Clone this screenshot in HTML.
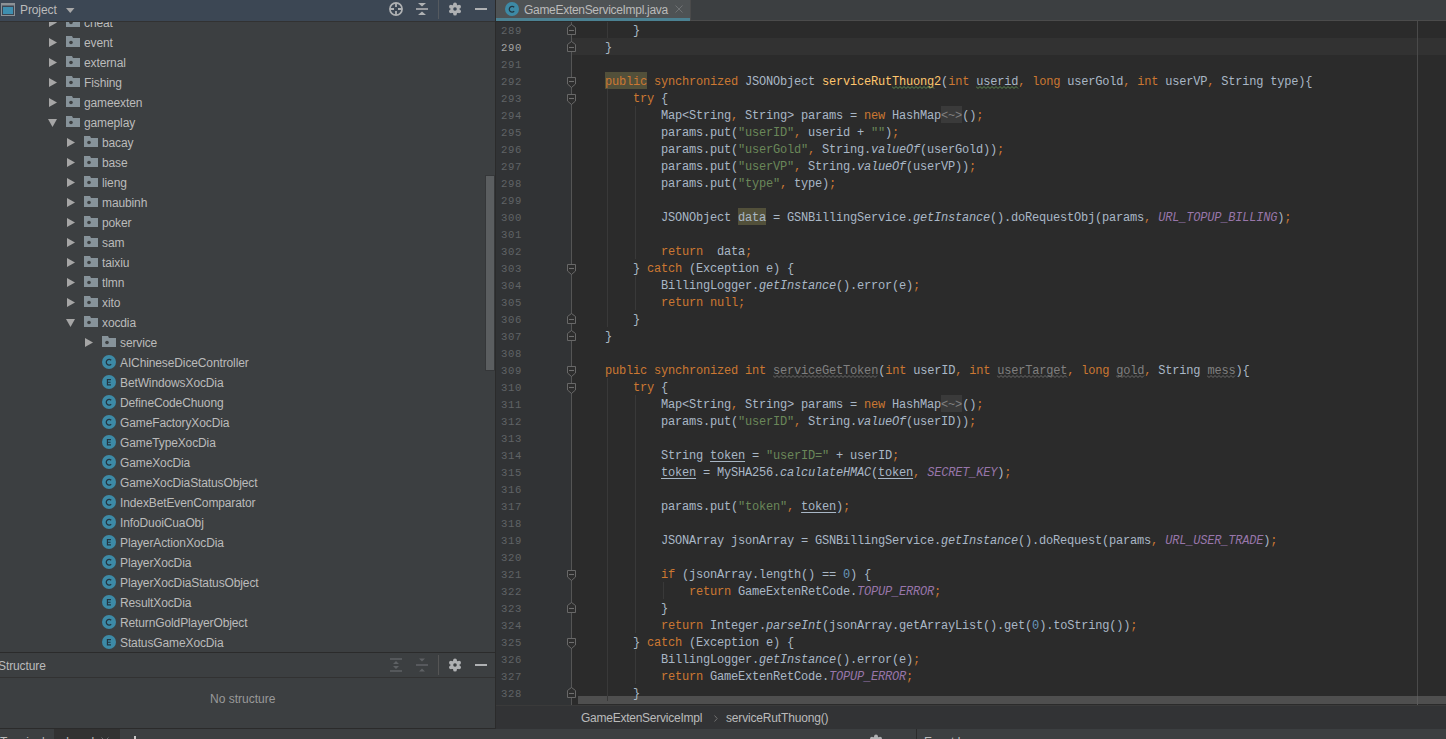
<!DOCTYPE html>
<html><head><meta charset="utf-8">
<style>
*{margin:0;padding:0;box-sizing:border-box}
html,body{width:1446px;height:739px;overflow:hidden;background:#3c3f41}
body{position:relative;font-family:"Liberation Sans",sans-serif;font-size:12px;color:#bbbbbb}
.abs{position:absolute}
/* left panel */
#lp{position:absolute;left:0;top:0;width:495px;height:729px;background:#3c3f41;overflow:hidden}
#lphdr{position:absolute;left:0;top:0;width:495px;height:21px;background:#3c4754}
#lphdr .title{position:absolute;left:20px;top:3px;font-size:12px;color:#bbbbbb;letter-spacing:-0.1px}
.tt{position:absolute;height:20px;line-height:20px;white-space:pre;color:#bbbbbb;letter-spacing:-0.12px;font-size:12px}
.ar,.ic{position:absolute}
.fi{position:absolute;width:14px;height:14px;border-radius:50%;background:#3d8aa6;color:#22333a;font-size:8px;line-height:14px;text-align:center;font-weight:normal}
#vsb{position:absolute;left:485px;top:175px;width:10px;height:196px;background:#353739}
#vsb div{position:absolute;left:1px;top:1px;width:8px;height:194px;background:#5b5e60}
/* editor */
#gut{position:absolute;left:496px;top:22px;width:76px;height:683px;background:#313335}
#ed{position:absolute;left:572px;top:22px;width:874px;height:683px;background:#2b2b2b}
.curl{position:absolute;left:572px;width:874px;height:17px;background:#323232}
.ln{position:absolute;left:501px;width:21px;height:17px;line-height:17px;font-family:"Liberation Mono",monospace;font-size:10.6px;letter-spacing:0.64px;color:#606366;white-space:pre}
.ln.cur{color:#a4a3a3}
.cl{position:absolute;left:577px;height:17px;line-height:17px;font-family:"Liberation Mono",monospace;font-size:12px;letter-spacing:-0.2px;color:#a9b7c6;white-space:pre}
.k{color:#cc7832}.s{color:#6a8759}.n{color:#6897bb}.f{color:#9876aa;font-style:italic}.i{font-style:italic}.m{color:#ffc66d}
.u{color:#808080}
.wv,.wv2{text-decoration:underline wavy;text-decoration-thickness:1px;text-underline-offset:2px}
.wv{text-decoration-color:#7a7a7a}.wv2{text-decoration-color:#619647}
.ul{text-decoration:underline;text-underline-offset:2px}
.bx{position:absolute;height:17px}
.fold{color:#808080}
.ig{position:absolute;width:1px;background:#393939}
.fm{position:absolute;left:567px;width:9px;height:11px}
.fm svg{display:block}
.wvs{position:absolute;display:block}
#foldline{position:absolute;left:571px;top:22px;width:1px;height:683px;background:#555555}
#rmargin{position:absolute;left:1417px;top:21px;width:1px;height:684px;background:#4a4a4a}
#hsb{position:absolute;left:578px;top:696px;width:868px;height:8px;background:#4f4f4f}
/* tabs */
#tabbar{position:absolute;left:496px;top:0;width:950px;height:21px;background:#3c3f41}
#tab{position:absolute;left:496px;top:0;width:194px;height:21px;background:#4e5254}
#tabul{position:absolute;left:496px;top:18px;width:194px;height:3px;background:#4b8192}
#tabsep{position:absolute;left:496px;top:21px;width:950px;height:1px;background:#2b2b2b}
#vdiv{position:absolute;left:495px;top:0;width:1px;height:729px;background:#2b2b2b}
/* breadcrumb */
#bc{position:absolute;left:496px;top:705px;width:950px;height:24px;background:#323335;border-top:1px solid #3a3a3a}
.bct{position:absolute;top:711px;font-size:12px;color:#bbbbbb;white-space:pre;letter-spacing:-0.17px}
/* bottom */
#bot{position:absolute;left:0;top:729px;width:1446px;height:10px;background:#3c3f41}
#botline{position:absolute;left:0;top:728px;width:495px;height:1px;background:#2b2b2b}
</style></head><body>
<div id="lp">
<svg class="ar" style="left:49px;top:18px" width="9" height="10" viewBox="0 0 9 10"><path d="M0,0 L8,4.5 L0,9 Z" fill="#a6a6a6"/></svg>
<svg class="ic" style="left:66px;top:16px" width="14" height="11" viewBox="0 0 14 11"><path d="M0,0 H6 L7,2 H14 V11 H0 Z" fill="#87939a"/><circle cx="5" cy="6.5" r="1.8" fill="#3c3f41"/></svg>
<div class="tt" style="left:84px;top:13px">cheat</div>
<svg class="ar" style="left:49px;top:38px" width="9" height="10" viewBox="0 0 9 10"><path d="M0,0 L8,4.5 L0,9 Z" fill="#a6a6a6"/></svg>
<svg class="ic" style="left:66px;top:36px" width="14" height="11" viewBox="0 0 14 11"><path d="M0,0 H6 L7,2 H14 V11 H0 Z" fill="#87939a"/><circle cx="5" cy="6.5" r="1.8" fill="#3c3f41"/></svg>
<div class="tt" style="left:84px;top:33px">event</div>
<svg class="ar" style="left:49px;top:58px" width="9" height="10" viewBox="0 0 9 10"><path d="M0,0 L8,4.5 L0,9 Z" fill="#a6a6a6"/></svg>
<svg class="ic" style="left:66px;top:56px" width="14" height="11" viewBox="0 0 14 11"><path d="M0,0 H6 L7,2 H14 V11 H0 Z" fill="#87939a"/><circle cx="5" cy="6.5" r="1.8" fill="#3c3f41"/></svg>
<div class="tt" style="left:84px;top:53px">external</div>
<svg class="ar" style="left:49px;top:78px" width="9" height="10" viewBox="0 0 9 10"><path d="M0,0 L8,4.5 L0,9 Z" fill="#a6a6a6"/></svg>
<svg class="ic" style="left:66px;top:76px" width="14" height="11" viewBox="0 0 14 11"><path d="M0,0 H6 L7,2 H14 V11 H0 Z" fill="#87939a"/><circle cx="5" cy="6.5" r="1.8" fill="#3c3f41"/></svg>
<div class="tt" style="left:84px;top:73px">Fishing</div>
<svg class="ar" style="left:49px;top:98px" width="9" height="10" viewBox="0 0 9 10"><path d="M0,0 L8,4.5 L0,9 Z" fill="#a6a6a6"/></svg>
<svg class="ic" style="left:66px;top:96px" width="14" height="11" viewBox="0 0 14 11"><path d="M0,0 H6 L7,2 H14 V11 H0 Z" fill="#87939a"/><circle cx="5" cy="6.5" r="1.8" fill="#3c3f41"/></svg>
<div class="tt" style="left:84px;top:93px">gameexten</div>
<svg class="ar" style="left:48px;top:119px" width="10" height="9" viewBox="0 0 10 9"><path d="M0,0 H9 L4.5,8 Z" fill="#a6a6a6"/></svg>
<svg class="ic" style="left:66px;top:116px" width="14" height="11" viewBox="0 0 14 11"><path d="M0,0 H6 L7,2 H14 V11 H0 Z" fill="#87939a"/><circle cx="5" cy="6.5" r="1.8" fill="#3c3f41"/></svg>
<div class="tt" style="left:84px;top:113px">gameplay</div>
<svg class="ar" style="left:67px;top:138px" width="9" height="10" viewBox="0 0 9 10"><path d="M0,0 L8,4.5 L0,9 Z" fill="#a6a6a6"/></svg>
<svg class="ic" style="left:84px;top:136px" width="14" height="11" viewBox="0 0 14 11"><path d="M0,0 H6 L7,2 H14 V11 H0 Z" fill="#87939a"/><circle cx="5" cy="6.5" r="1.8" fill="#3c3f41"/></svg>
<div class="tt" style="left:102px;top:133px">bacay</div>
<svg class="ar" style="left:67px;top:158px" width="9" height="10" viewBox="0 0 9 10"><path d="M0,0 L8,4.5 L0,9 Z" fill="#a6a6a6"/></svg>
<svg class="ic" style="left:84px;top:156px" width="14" height="11" viewBox="0 0 14 11"><path d="M0,0 H6 L7,2 H14 V11 H0 Z" fill="#87939a"/><circle cx="5" cy="6.5" r="1.8" fill="#3c3f41"/></svg>
<div class="tt" style="left:102px;top:153px">base</div>
<svg class="ar" style="left:67px;top:178px" width="9" height="10" viewBox="0 0 9 10"><path d="M0,0 L8,4.5 L0,9 Z" fill="#a6a6a6"/></svg>
<svg class="ic" style="left:84px;top:176px" width="14" height="11" viewBox="0 0 14 11"><path d="M0,0 H6 L7,2 H14 V11 H0 Z" fill="#87939a"/><circle cx="5" cy="6.5" r="1.8" fill="#3c3f41"/></svg>
<div class="tt" style="left:102px;top:173px">lieng</div>
<svg class="ar" style="left:67px;top:198px" width="9" height="10" viewBox="0 0 9 10"><path d="M0,0 L8,4.5 L0,9 Z" fill="#a6a6a6"/></svg>
<svg class="ic" style="left:84px;top:196px" width="14" height="11" viewBox="0 0 14 11"><path d="M0,0 H6 L7,2 H14 V11 H0 Z" fill="#87939a"/><circle cx="5" cy="6.5" r="1.8" fill="#3c3f41"/></svg>
<div class="tt" style="left:102px;top:193px">maubinh</div>
<svg class="ar" style="left:67px;top:218px" width="9" height="10" viewBox="0 0 9 10"><path d="M0,0 L8,4.5 L0,9 Z" fill="#a6a6a6"/></svg>
<svg class="ic" style="left:84px;top:216px" width="14" height="11" viewBox="0 0 14 11"><path d="M0,0 H6 L7,2 H14 V11 H0 Z" fill="#87939a"/><circle cx="5" cy="6.5" r="1.8" fill="#3c3f41"/></svg>
<div class="tt" style="left:102px;top:213px">poker</div>
<svg class="ar" style="left:67px;top:238px" width="9" height="10" viewBox="0 0 9 10"><path d="M0,0 L8,4.5 L0,9 Z" fill="#a6a6a6"/></svg>
<svg class="ic" style="left:84px;top:236px" width="14" height="11" viewBox="0 0 14 11"><path d="M0,0 H6 L7,2 H14 V11 H0 Z" fill="#87939a"/><circle cx="5" cy="6.5" r="1.8" fill="#3c3f41"/></svg>
<div class="tt" style="left:102px;top:233px">sam</div>
<svg class="ar" style="left:67px;top:258px" width="9" height="10" viewBox="0 0 9 10"><path d="M0,0 L8,4.5 L0,9 Z" fill="#a6a6a6"/></svg>
<svg class="ic" style="left:84px;top:256px" width="14" height="11" viewBox="0 0 14 11"><path d="M0,0 H6 L7,2 H14 V11 H0 Z" fill="#87939a"/><circle cx="5" cy="6.5" r="1.8" fill="#3c3f41"/></svg>
<div class="tt" style="left:102px;top:253px">taixiu</div>
<svg class="ar" style="left:67px;top:278px" width="9" height="10" viewBox="0 0 9 10"><path d="M0,0 L8,4.5 L0,9 Z" fill="#a6a6a6"/></svg>
<svg class="ic" style="left:84px;top:276px" width="14" height="11" viewBox="0 0 14 11"><path d="M0,0 H6 L7,2 H14 V11 H0 Z" fill="#87939a"/><circle cx="5" cy="6.5" r="1.8" fill="#3c3f41"/></svg>
<div class="tt" style="left:102px;top:273px">tlmn</div>
<svg class="ar" style="left:67px;top:298px" width="9" height="10" viewBox="0 0 9 10"><path d="M0,0 L8,4.5 L0,9 Z" fill="#a6a6a6"/></svg>
<svg class="ic" style="left:84px;top:296px" width="14" height="11" viewBox="0 0 14 11"><path d="M0,0 H6 L7,2 H14 V11 H0 Z" fill="#87939a"/><circle cx="5" cy="6.5" r="1.8" fill="#3c3f41"/></svg>
<div class="tt" style="left:102px;top:293px">xito</div>
<svg class="ar" style="left:66px;top:319px" width="10" height="9" viewBox="0 0 10 9"><path d="M0,0 H9 L4.5,8 Z" fill="#a6a6a6"/></svg>
<svg class="ic" style="left:84px;top:316px" width="14" height="11" viewBox="0 0 14 11"><path d="M0,0 H6 L7,2 H14 V11 H0 Z" fill="#87939a"/><circle cx="5" cy="6.5" r="1.8" fill="#3c3f41"/></svg>
<div class="tt" style="left:102px;top:313px">xocdia</div>
<svg class="ar" style="left:85px;top:338px" width="9" height="10" viewBox="0 0 9 10"><path d="M0,0 L8,4.5 L0,9 Z" fill="#a6a6a6"/></svg>
<svg class="ic" style="left:102px;top:336px" width="14" height="11" viewBox="0 0 14 11"><path d="M0,0 H6 L7,2 H14 V11 H0 Z" fill="#87939a"/><circle cx="5" cy="6.5" r="1.8" fill="#3c3f41"/></svg>
<div class="tt" style="left:120px;top:333px">service</div>
<svg class="ic" style="left:102px;top:355px" width="14" height="14" viewBox="0 0 14 14"><circle cx="7" cy="7" r="7" fill="#3d8aa6"/><path d="M9.2,5.2 A2.9,2.9 0 1 0 9.2,9.3" fill="none" stroke="#213540" stroke-width="1.25"/></svg>
<div class="tt" style="left:120px;top:353px">AIChineseDiceController</div>
<svg class="ic" style="left:102px;top:375px" width="14" height="14" viewBox="0 0 14 14"><circle cx="7" cy="7" r="7" fill="#3d8aa6"/><path d="M9,4.6 H5.4 V9.9 H9 M5.4,7.25 H8.6" fill="none" stroke="#213540" stroke-width="1.15"/></svg>
<div class="tt" style="left:120px;top:373px">BetWindowsXocDia</div>
<svg class="ic" style="left:102px;top:395px" width="14" height="14" viewBox="0 0 14 14"><circle cx="7" cy="7" r="7" fill="#3d8aa6"/><path d="M9.2,5.2 A2.9,2.9 0 1 0 9.2,9.3" fill="none" stroke="#213540" stroke-width="1.25"/></svg>
<div class="tt" style="left:120px;top:393px">DefineCodeChuong</div>
<svg class="ic" style="left:102px;top:415px" width="14" height="14" viewBox="0 0 14 14"><circle cx="7" cy="7" r="7" fill="#3d8aa6"/><path d="M9.2,5.2 A2.9,2.9 0 1 0 9.2,9.3" fill="none" stroke="#213540" stroke-width="1.25"/></svg>
<div class="tt" style="left:120px;top:413px">GameFactoryXocDia</div>
<svg class="ic" style="left:102px;top:435px" width="14" height="14" viewBox="0 0 14 14"><circle cx="7" cy="7" r="7" fill="#3d8aa6"/><path d="M9,4.6 H5.4 V9.9 H9 M5.4,7.25 H8.6" fill="none" stroke="#213540" stroke-width="1.15"/></svg>
<div class="tt" style="left:120px;top:433px">GameTypeXocDia</div>
<svg class="ic" style="left:102px;top:455px" width="14" height="14" viewBox="0 0 14 14"><circle cx="7" cy="7" r="7" fill="#3d8aa6"/><path d="M9.2,5.2 A2.9,2.9 0 1 0 9.2,9.3" fill="none" stroke="#213540" stroke-width="1.25"/></svg>
<div class="tt" style="left:120px;top:453px">GameXocDia</div>
<svg class="ic" style="left:102px;top:475px" width="14" height="14" viewBox="0 0 14 14"><circle cx="7" cy="7" r="7" fill="#3d8aa6"/><path d="M9.2,5.2 A2.9,2.9 0 1 0 9.2,9.3" fill="none" stroke="#213540" stroke-width="1.25"/></svg>
<div class="tt" style="left:120px;top:473px">GameXocDiaStatusObject</div>
<svg class="ic" style="left:102px;top:495px" width="14" height="14" viewBox="0 0 14 14"><circle cx="7" cy="7" r="7" fill="#3d8aa6"/><path d="M9.2,5.2 A2.9,2.9 0 1 0 9.2,9.3" fill="none" stroke="#213540" stroke-width="1.25"/></svg>
<div class="tt" style="left:120px;top:493px">IndexBetEvenComparator</div>
<svg class="ic" style="left:102px;top:515px" width="14" height="14" viewBox="0 0 14 14"><circle cx="7" cy="7" r="7" fill="#3d8aa6"/><path d="M9.2,5.2 A2.9,2.9 0 1 0 9.2,9.3" fill="none" stroke="#213540" stroke-width="1.25"/></svg>
<div class="tt" style="left:120px;top:513px">InfoDuoiCuaObj</div>
<svg class="ic" style="left:102px;top:535px" width="14" height="14" viewBox="0 0 14 14"><circle cx="7" cy="7" r="7" fill="#3d8aa6"/><path d="M9,4.6 H5.4 V9.9 H9 M5.4,7.25 H8.6" fill="none" stroke="#213540" stroke-width="1.15"/></svg>
<div class="tt" style="left:120px;top:533px">PlayerActionXocDia</div>
<svg class="ic" style="left:102px;top:555px" width="14" height="14" viewBox="0 0 14 14"><circle cx="7" cy="7" r="7" fill="#3d8aa6"/><path d="M9.2,5.2 A2.9,2.9 0 1 0 9.2,9.3" fill="none" stroke="#213540" stroke-width="1.25"/></svg>
<div class="tt" style="left:120px;top:553px">PlayerXocDia</div>
<svg class="ic" style="left:102px;top:575px" width="14" height="14" viewBox="0 0 14 14"><circle cx="7" cy="7" r="7" fill="#3d8aa6"/><path d="M9.2,5.2 A2.9,2.9 0 1 0 9.2,9.3" fill="none" stroke="#213540" stroke-width="1.25"/></svg>
<div class="tt" style="left:120px;top:573px">PlayerXocDiaStatusObject</div>
<svg class="ic" style="left:102px;top:595px" width="14" height="14" viewBox="0 0 14 14"><circle cx="7" cy="7" r="7" fill="#3d8aa6"/><path d="M9,4.6 H5.4 V9.9 H9 M5.4,7.25 H8.6" fill="none" stroke="#213540" stroke-width="1.15"/></svg>
<div class="tt" style="left:120px;top:593px">ResultXocDia</div>
<svg class="ic" style="left:102px;top:615px" width="14" height="14" viewBox="0 0 14 14"><circle cx="7" cy="7" r="7" fill="#3d8aa6"/><path d="M9.2,5.2 A2.9,2.9 0 1 0 9.2,9.3" fill="none" stroke="#213540" stroke-width="1.25"/></svg>
<div class="tt" style="left:120px;top:613px">ReturnGoldPlayerObject</div>
<svg class="ic" style="left:102px;top:635px" width="14" height="14" viewBox="0 0 14 14"><circle cx="7" cy="7" r="7" fill="#3d8aa6"/><path d="M9,4.6 H5.4 V9.9 H9 M5.4,7.25 H8.6" fill="none" stroke="#213540" stroke-width="1.15"/></svg>
<div class="tt" style="left:120px;top:633px">StatusGameXocDia</div>
<div id="vsb"><div></div></div>
<div id="lphdr">
  <svg class="abs" style="left:1px;top:3px" width="14" height="13" viewBox="0 0 14 13"><rect x="0.5" y="0.5" width="13" height="12" fill="none" stroke="#8c9296" stroke-width="1"/><rect x="0.5" y="0.5" width="13" height="2" fill="#8c9296"/><rect x="2" y="4" width="10" height="7" fill="#3e8fb0"/></svg>
  <div class="title">Project</div>
  <svg class="abs" style="left:66px;top:8px" width="9" height="6" viewBox="0 0 9 6"><path d="M0,0 H8.5 L4.25,5 Z" fill="#a8a8a8"/></svg>
  <svg class="abs" style="left:389px;top:2px" width="15" height="15" viewBox="0 0 15 15"><circle cx="7" cy="7" r="6.1" fill="none" stroke="#afb1b3" stroke-width="1.7"/><path d="M7,1 V5 M7,9 V13 M1,7 H5 M9,7 H13" stroke="#afb1b3" stroke-width="1.8"/></svg>
  <svg class="abs" style="left:415px;top:1px" width="14" height="16" viewBox="0 0 14 16"><path d="M1,8 H13" stroke="#afb1b3" stroke-width="1.6"/><path d="M3,2 H11 L7,5.5 Z M3,14 H11 L7,10.5 Z" fill="#afb1b3"/></svg>
  <div class="abs" style="left:438px;top:0;width:1px;height:19px;background:#555a60"></div>
  <svg class="abs" style="left:448px;top:2px" width="14" height="14" viewBox="0 0 14 14"><g fill="#afb1b3"><circle cx="7.00" cy="2.30" r="1.9"/><circle cx="11.07" cy="4.65" r="1.9"/><circle cx="11.07" cy="9.35" r="1.9"/><circle cx="7.00" cy="11.70" r="1.9"/><circle cx="2.93" cy="9.35" r="1.9"/><circle cx="2.93" cy="4.65" r="1.9"/><circle cx="7" cy="7" r="4.6"/></g><circle cx="7" cy="7" r="1.8" fill="#3c4754"/></svg>
  <div class="abs" style="left:475px;top:8px;width:12px;height:2px;background:#afb1b3"></div>
</div>
<div class="abs" style="left:0;top:21px;width:495px;height:1px;background:#323232"></div>
<div class="abs" style="left:0;top:652px;width:495px;height:1px;background:#2b2b2b"></div>
<div class="abs" style="left:0;top:653px;width:495px;height:24px;background:#3c3f41"></div>
<div class="abs" style="left:-2px;top:659px;font-size:12px;color:#bbbbbb;letter-spacing:-0.1px">Structure</div>
<div class="abs" style="left:0;top:677px;width:495px;height:1px;background:#323232"></div>
<div class="abs" style="left:210px;top:692px;font-size:12px;color:#999999;letter-spacing:0px">No structure</div>
<svg class="abs" style="left:389px;top:657px" width="14" height="16" viewBox="0 0 14 16"><path d="M1,2 H13 M1,14 H13" stroke="#5e6164" stroke-width="1.6"/><path d="M4,7 L7,4 L10,7 Z M4,9 H10 L7,12 Z" fill="#5e6164"/></svg>
<svg class="abs" style="left:415px;top:657px" width="14" height="16" viewBox="0 0 14 16"><path d="M1,8 H13" stroke="#5e6164" stroke-width="1.6"/><path d="M4,1.5 H10 L7,4.5 Z M4,14.5 H10 L7,11.5 Z" fill="#5e6164"/></svg>
<div class="abs" style="left:438px;top:655px;width:1px;height:20px;background:#555555"></div>
<svg class="abs" style="left:448px;top:658px" width="14" height="14" viewBox="0 0 14 14"><g fill="#afb1b3"><circle cx="7.00" cy="2.30" r="1.9"/><circle cx="11.07" cy="4.65" r="1.9"/><circle cx="11.07" cy="9.35" r="1.9"/><circle cx="7.00" cy="11.70" r="1.9"/><circle cx="2.93" cy="9.35" r="1.9"/><circle cx="2.93" cy="4.65" r="1.9"/><circle cx="7" cy="7" r="4.6"/></g><circle cx="7" cy="7" r="1.8" fill="#3c3f41"/></svg>
<div class="abs" style="left:475px;top:664px;width:12px;height:2px;background:#afb1b3"></div>
</div>
<div id="vdiv"></div>
<div id="gut"></div>
<div id="ed"></div>
<div class="curl" style="top:38px"></div>
<div id="rmargin"></div>
<div id="foldline"></div>
<div id="hsb"></div>
<div class="ig" style="left:607px;top:21px;height:17px"></div>
<div class="ig" style="left:607px;top:89px;height:238px"></div>
<div class="ig" style="left:635px;top:106px;height:153px"></div>
<div class="ig" style="left:635px;top:276px;height:34px"></div>
<div class="ig" style="left:607px;top:378px;height:323px"></div>
<div class="ig" style="left:635px;top:395px;height:238px"></div>
<div class="ig" style="left:663px;top:582px;height:17px"></div>
<div class="ig" style="left:635px;top:650px;height:34px"></div>
<div class="bx" style="left:941px;top:395px;width:21px;background:#3a3a3a"></div>
<div class="bx" style="left:941px;top:106px;width:21px;background:#3a3a3a"></div>
<div class="bx" style="left:738px;top:208px;width:28px;background:#52503a"></div>
<div class="bx" style="left:605px;top:72px;width:42px;background:#52503a"></div>
<div class="ln" style="top:23px">289</div>
<div class="cl" style="top:23px">        }</div>
<div class="ln cur" style="top:40px">290</div>
<div class="cl" style="top:40px">    }</div>
<div class="ln" style="top:57px">291</div>
<div class="cl" style="top:57px"></div>
<div class="ln" style="top:74px">292</div>
<div class="cl" style="top:74px">    <span class="k">public</span> <span class="k">synchronized</span> JSONObject <span class="m">serviceRutThuong2</span>(<span class="k">int</span> userid<span class="k">,</span> <span class="k">long</span> userGold<span class="k">,</span> <span class="k">int</span> userVP<span class="k">,</span> String type){</div>
<div class="ln" style="top:91px">293</div>
<div class="cl" style="top:91px">        <span class="k">try</span> {</div>
<div class="ln" style="top:108px">294</div>
<div class="cl" style="top:108px">            Map&lt;String<span class="k">,</span> String&gt; params = <span class="k">new</span> HashMap<span class="fold">&lt;~&gt;</span>()<span class="k">;</span></div>
<div class="ln" style="top:125px">295</div>
<div class="cl" style="top:125px">            params.put(<span class="s">&quot;userID&quot;</span><span class="k">,</span> userid + <span class="s">&quot;&quot;</span>)<span class="k">;</span></div>
<div class="ln" style="top:142px">296</div>
<div class="cl" style="top:142px">            params.put(<span class="s">&quot;userGold&quot;</span><span class="k">,</span> String.<span class="i">valueOf</span>(userGold))<span class="k">;</span></div>
<div class="ln" style="top:159px">297</div>
<div class="cl" style="top:159px">            params.put(<span class="s">&quot;userVP&quot;</span><span class="k">,</span> String.<span class="i">valueOf</span>(userVP))<span class="k">;</span></div>
<div class="ln" style="top:176px">298</div>
<div class="cl" style="top:176px">            params.put(<span class="s">&quot;type&quot;</span><span class="k">,</span> type)<span class="k">;</span></div>
<div class="ln" style="top:193px">299</div>
<div class="cl" style="top:193px"></div>
<div class="ln" style="top:210px">300</div>
<div class="cl" style="top:210px">            JSONObject data = GSNBillingService.<span class="i">getInstance</span>().doRequestObj(params<span class="k">,</span> <span class="f">URL_TOPUP_BILLING</span>)<span class="k">;</span></div>
<div class="ln" style="top:227px">301</div>
<div class="cl" style="top:227px"></div>
<div class="ln" style="top:244px">302</div>
<div class="cl" style="top:244px">            <span class="k">return</span>  data<span class="k">;</span></div>
<div class="ln" style="top:261px">303</div>
<div class="cl" style="top:261px">        } <span class="k">catch</span> (Exception e) {</div>
<div class="ln" style="top:278px">304</div>
<div class="cl" style="top:278px">            BillingLogger.<span class="i">getInstance</span>().error(e)<span class="k">;</span></div>
<div class="ln" style="top:295px">305</div>
<div class="cl" style="top:295px">            <span class="k">return</span> <span class="k">null</span><span class="k">;</span></div>
<div class="ln" style="top:312px">306</div>
<div class="cl" style="top:312px">        }</div>
<div class="ln" style="top:329px">307</div>
<div class="cl" style="top:329px">    }</div>
<div class="ln" style="top:346px">308</div>
<div class="cl" style="top:346px"></div>
<div class="ln" style="top:363px">309</div>
<div class="cl" style="top:363px">    <span class="k">public</span> <span class="k">synchronized</span> <span class="k">int</span> <span class="u">serviceGetToken</span>(<span class="k">int</span> userID<span class="k">,</span> <span class="k">int</span> <span class="u">userTarget</span><span class="k">,</span> <span class="k">long</span> <span class="u">gold</span><span class="k">,</span> String <span class="u">mess</span>){</div>
<div class="ln" style="top:380px">310</div>
<div class="cl" style="top:380px">        <span class="k">try</span> {</div>
<div class="ln" style="top:397px">311</div>
<div class="cl" style="top:397px">            Map&lt;String<span class="k">,</span> String&gt; params = <span class="k">new</span> HashMap<span class="fold">&lt;~&gt;</span>()<span class="k">;</span></div>
<div class="ln" style="top:414px">312</div>
<div class="cl" style="top:414px">            params.put(<span class="s">&quot;userID&quot;</span><span class="k">,</span> String.<span class="i">valueOf</span>(userID))<span class="k">;</span></div>
<div class="ln" style="top:431px">313</div>
<div class="cl" style="top:431px"></div>
<div class="ln" style="top:448px">314</div>
<div class="cl" style="top:448px">            String <span class="ul">token</span> = <span class="s">&quot;userID=&quot;</span> + userID<span class="k">;</span></div>
<div class="ln" style="top:465px">315</div>
<div class="cl" style="top:465px">            <span class="ul">token</span> = MySHA256.<span class="i">calculateHMAC</span>(<span class="ul">token</span><span class="k">,</span> <span class="f">SECRET_KEY</span>)<span class="k">;</span></div>
<div class="ln" style="top:482px">316</div>
<div class="cl" style="top:482px"></div>
<div class="ln" style="top:499px">317</div>
<div class="cl" style="top:499px">            params.put(<span class="s">&quot;token&quot;</span><span class="k">,</span> <span class="ul">token</span>)<span class="k">;</span></div>
<div class="ln" style="top:516px">318</div>
<div class="cl" style="top:516px"></div>
<div class="ln" style="top:533px">319</div>
<div class="cl" style="top:533px">            JSONArray jsonArray = GSNBillingService.<span class="i">getInstance</span>().doRequest(params<span class="k">,</span> <span class="f">URL_USER_TRADE</span>)<span class="k">;</span></div>
<div class="ln" style="top:550px">320</div>
<div class="cl" style="top:550px"></div>
<div class="ln" style="top:567px">321</div>
<div class="cl" style="top:567px">            <span class="k">if</span> (jsonArray.length() == <span class="n">0</span>) {</div>
<div class="ln" style="top:584px">322</div>
<div class="cl" style="top:584px">                <span class="k">return</span> GameExtenRetCode.<span class="f">TOPUP_ERROR</span><span class="k">;</span></div>
<div class="ln" style="top:601px">323</div>
<div class="cl" style="top:601px">            }</div>
<div class="ln" style="top:618px">324</div>
<div class="cl" style="top:618px">            <span class="k">return</span> Integer.<span class="i">parseInt</span>(jsonArray.getArrayList().get(<span class="n">0</span>).toString())<span class="k">;</span></div>
<div class="ln" style="top:635px">325</div>
<div class="cl" style="top:635px">        } <span class="k">catch</span> (Exception e) {</div>
<div class="ln" style="top:652px">326</div>
<div class="cl" style="top:652px">            BillingLogger.<span class="i">getInstance</span>().error(e)<span class="k">;</span></div>
<div class="ln" style="top:669px">327</div>
<div class="cl" style="top:669px">            <span class="k">return</span> GameExtenRetCode.<span class="f">TOPUP_ERROR</span><span class="k">;</span></div>
<div class="ln" style="top:686px">328</div>
<div class="cl" style="top:686px">        }</div>
<div class="fm" style="top:24px"><svg width="9" height="11" viewBox="0 0 9 11"><path d="M0.5,10.5 H8.5 V3.5 L4.5,0.5 L0.5,3.5 Z" fill="#2d2d2d" stroke="#686868" stroke-width="1"/><path d="M2,6.5 H7" stroke="#6e6e6e" stroke-width="1.1"/></svg></div>
<div class="fm" style="top:41px"><svg width="9" height="11" viewBox="0 0 9 11"><path d="M0.5,10.5 H8.5 V3.5 L4.5,0.5 L0.5,3.5 Z" fill="#2d2d2d" stroke="#686868" stroke-width="1"/><path d="M2,6.5 H7" stroke="#6e6e6e" stroke-width="1.1"/></svg></div>
<div class="fm" style="top:77px"><svg width="9" height="11" viewBox="0 0 9 11"><path d="M0.5,0.5 H8.5 V7 L4.5,10.5 L0.5,7 Z" fill="#2d2d2d" stroke="#686868" stroke-width="1"/><path d="M2,4.5 H7" stroke="#6e6e6e" stroke-width="1.1"/></svg></div>
<div class="fm" style="top:94px"><svg width="9" height="11" viewBox="0 0 9 11"><path d="M0.5,0.5 H8.5 V7 L4.5,10.5 L0.5,7 Z" fill="#2d2d2d" stroke="#686868" stroke-width="1"/><path d="M2,4.5 H7" stroke="#6e6e6e" stroke-width="1.1"/></svg></div>
<div class="fm" style="top:264px"><svg width="9" height="11" viewBox="0 0 9 11"><path d="M0.5,0.5 H8.5 V7 L4.5,10.5 L0.5,7 Z" fill="#2d2d2d" stroke="#686868" stroke-width="1"/><path d="M2,4.5 H7" stroke="#6e6e6e" stroke-width="1.1"/></svg></div>
<div class="fm" style="top:313px"><svg width="9" height="11" viewBox="0 0 9 11"><path d="M0.5,10.5 H8.5 V3.5 L4.5,0.5 L0.5,3.5 Z" fill="#2d2d2d" stroke="#686868" stroke-width="1"/><path d="M2,6.5 H7" stroke="#6e6e6e" stroke-width="1.1"/></svg></div>
<div class="fm" style="top:330px"><svg width="9" height="11" viewBox="0 0 9 11"><path d="M0.5,10.5 H8.5 V3.5 L4.5,0.5 L0.5,3.5 Z" fill="#2d2d2d" stroke="#686868" stroke-width="1"/><path d="M2,6.5 H7" stroke="#6e6e6e" stroke-width="1.1"/></svg></div>
<div class="fm" style="top:366px"><svg width="9" height="11" viewBox="0 0 9 11"><path d="M0.5,0.5 H8.5 V7 L4.5,10.5 L0.5,7 Z" fill="#2d2d2d" stroke="#686868" stroke-width="1"/><path d="M2,4.5 H7" stroke="#6e6e6e" stroke-width="1.1"/></svg></div>
<div class="fm" style="top:383px"><svg width="9" height="11" viewBox="0 0 9 11"><path d="M0.5,0.5 H8.5 V7 L4.5,10.5 L0.5,7 Z" fill="#2d2d2d" stroke="#686868" stroke-width="1"/><path d="M2,4.5 H7" stroke="#6e6e6e" stroke-width="1.1"/></svg></div>
<div class="fm" style="top:570px"><svg width="9" height="11" viewBox="0 0 9 11"><path d="M0.5,0.5 H8.5 V7 L4.5,10.5 L0.5,7 Z" fill="#2d2d2d" stroke="#686868" stroke-width="1"/><path d="M2,4.5 H7" stroke="#6e6e6e" stroke-width="1.1"/></svg></div>
<div class="fm" style="top:602px"><svg width="9" height="11" viewBox="0 0 9 11"><path d="M0.5,10.5 H8.5 V3.5 L4.5,0.5 L0.5,3.5 Z" fill="#2d2d2d" stroke="#686868" stroke-width="1"/><path d="M2,6.5 H7" stroke="#6e6e6e" stroke-width="1.1"/></svg></div>
<div class="fm" style="top:638px"><svg width="9" height="11" viewBox="0 0 9 11"><path d="M0.5,0.5 H8.5 V7 L4.5,10.5 L0.5,7 Z" fill="#2d2d2d" stroke="#686868" stroke-width="1"/><path d="M2,4.5 H7" stroke="#6e6e6e" stroke-width="1.1"/></svg></div>
<div class="fm" style="top:687px"><svg width="9" height="11" viewBox="0 0 9 11"><path d="M0.5,10.5 H8.5 V3.5 L4.5,0.5 L0.5,3.5 Z" fill="#2d2d2d" stroke="#686868" stroke-width="1"/><path d="M2,6.5 H7" stroke="#6e6e6e" stroke-width="1.1"/></svg></div>
<svg class="wvs" style="left:892px;top:86px" width="43" height="3" viewBox="0 0 43 3"><polyline points="0,0.5 2,2.5 4,0.5 6,2.5 8,0.5 10,2.5 12,0.5 14,2.5 16,0.5 18,2.5 20,0.5 22,2.5 24,0.5 26,2.5 28,0.5 30,2.5 32,0.5 34,2.5 36,0.5 38,2.5 40,0.5 42,2.5" fill="none" stroke="#5f8c50" stroke-width="1"/></svg>
<svg class="wvs" style="left:976px;top:86px" width="43" height="3" viewBox="0 0 43 3"><polyline points="0,0.5 2,2.5 4,0.5 6,2.5 8,0.5 10,2.5 12,0.5 14,2.5 16,0.5 18,2.5 20,0.5 22,2.5 24,0.5 26,2.5 28,0.5 30,2.5 32,0.5 34,2.5 36,0.5 38,2.5 40,0.5 42,2.5" fill="none" stroke="#5f8c50" stroke-width="1"/></svg>
<svg class="wvs" style="left:773px;top:375px" width="106" height="3" viewBox="0 0 106 3"><polyline points="0,0.5 2,2.5 4,0.5 6,2.5 8,0.5 10,2.5 12,0.5 14,2.5 16,0.5 18,2.5 20,0.5 22,2.5 24,0.5 26,2.5 28,0.5 30,2.5 32,0.5 34,2.5 36,0.5 38,2.5 40,0.5 42,2.5 44,0.5 46,2.5 48,0.5 50,2.5 52,0.5 54,2.5 56,0.5 58,2.5 60,0.5 62,2.5 64,0.5 66,2.5 68,0.5 70,2.5 72,0.5 74,2.5 76,0.5 78,2.5 80,0.5 82,2.5 84,0.5 86,2.5 88,0.5 90,2.5 92,0.5 94,2.5 96,0.5 98,2.5 100,0.5 102,2.5 104,0.5" fill="none" stroke="#6b6b6b" stroke-width="1"/></svg>
<svg class="wvs" style="left:997px;top:375px" width="71" height="3" viewBox="0 0 71 3"><polyline points="0,0.5 2,2.5 4,0.5 6,2.5 8,0.5 10,2.5 12,0.5 14,2.5 16,0.5 18,2.5 20,0.5 22,2.5 24,0.5 26,2.5 28,0.5 30,2.5 32,0.5 34,2.5 36,0.5 38,2.5 40,0.5 42,2.5 44,0.5 46,2.5 48,0.5 50,2.5 52,0.5 54,2.5 56,0.5 58,2.5 60,0.5 62,2.5 64,0.5 66,2.5 68,0.5 70,2.5" fill="none" stroke="#6b6b6b" stroke-width="1"/></svg>
<svg class="wvs" style="left:1116px;top:375px" width="29" height="3" viewBox="0 0 29 3"><polyline points="0,0.5 2,2.5 4,0.5 6,2.5 8,0.5 10,2.5 12,0.5 14,2.5 16,0.5 18,2.5 20,0.5 22,2.5 24,0.5 26,2.5 28,0.5" fill="none" stroke="#6b6b6b" stroke-width="1"/></svg>
<svg class="wvs" style="left:1207px;top:375px" width="29" height="3" viewBox="0 0 29 3"><polyline points="0,0.5 2,2.5 4,0.5 6,2.5 8,0.5 10,2.5 12,0.5 14,2.5 16,0.5 18,2.5 20,0.5 22,2.5 24,0.5 26,2.5 28,0.5" fill="none" stroke="#6b6b6b" stroke-width="1"/></svg>
<div class="abs" style="left:1417px;top:696px;width:1px;height:9px;background:#5c5c5c"></div>
<div id="tabbar"></div>
<div id="tab"></div>
<div id="tabul"></div>
<div id="tabsep"></div>
<div class="abs" style="left:1417px;top:21px;width:1px;height:1px;background:#4a4a4a"></div>
<div class="abs" style="left:690px;top:0;width:1px;height:21px;background:#4a4a4a"></div>
<div class="abs" style="left:690px;top:20px;width:756px;height:1px;background:#4b4b4b"></div>
<svg class="abs" style="left:505px;top:2px" width="14" height="14" viewBox="0 0 14 14"><circle cx="7" cy="7" r="7" fill="#3d8aa6"/><path d="M9.2,5.2 A2.9,2.9 0 1 0 9.2,9.3" fill="none" stroke="#213540" stroke-width="1.25"/></svg>
<div class="abs" style="left:524px;top:3px;font-size:12px;color:#bbbbbb;letter-spacing:-0.3px;white-space:pre">GameExtenServiceImpl.java</div>
<svg class="abs" style="left:675px;top:5px" width="8" height="8" viewBox="0 0 8 8"><path d="M0.5,0.5 L7.5,7.5 M7.5,0.5 L0.5,7.5" stroke="#6e7173" stroke-width="1"/></svg>
<div id="bc"></div>
<div class="bct" style="left:581px;letter-spacing:-0.25px">GameExtenServiceImpl</div>
<svg class="abs" style="left:714px;top:715px" width="4" height="7" viewBox="0 0 4 7"><path d="M0.5,0.5 L3.2,3.5 L0.5,6.5" fill="none" stroke="#707070" stroke-width="1"/></svg>
<div class="bct" style="left:726px">serviceRutThuong()</div>
<div id="bot"></div>
<div class="abs" style="left:0;top:728px;width:496px;height:1px;background:#2b2b2b"></div>
<div class="abs" style="left:54px;top:729px;width:66px;height:10px;background:#323232"></div>
<div class="abs" style="left:916px;top:729px;width:1px;height:10px;background:#2b2b2b"></div>
<div class="abs" style="left:0;top:735px;font-size:12px;color:#bbbbbb;white-space:pre;letter-spacing:-0.1px">Terminal:</div>
<div class="abs" style="left:66px;top:735px;font-size:12px;color:#bbbbbb;white-space:pre;letter-spacing:-0.1px">Local</div>
<svg class="abs" style="left:101px;top:737px" width="8" height="8" viewBox="0 0 8 8"><path d="M0.5,0.5 L7.5,7.5 M7.5,0.5 L0.5,7.5" stroke="#6e7173" stroke-width="1"/></svg>
<div class="abs" style="left:134px;top:736px;width:2px;height:3px;background:#c8c8c8"></div>
<svg class="abs" style="left:869px;top:734px" width="14" height="14" viewBox="0 0 14 14"><g fill="#afb1b3"><circle cx="7.00" cy="2.30" r="1.9"/><circle cx="11.07" cy="4.65" r="1.9"/><circle cx="11.07" cy="9.35" r="1.9"/><circle cx="7.00" cy="11.70" r="1.9"/><circle cx="2.93" cy="9.35" r="1.9"/><circle cx="2.93" cy="4.65" r="1.9"/><circle cx="7" cy="7" r="4.6"/></g><circle cx="7" cy="7" r="1.8" fill="#3c3f41"/></svg>
<div class="abs" style="left:924px;top:735px;font-size:12px;color:#bbbbbb;white-space:pre;letter-spacing:-0.1px">Event Log</div>
</body></html>
